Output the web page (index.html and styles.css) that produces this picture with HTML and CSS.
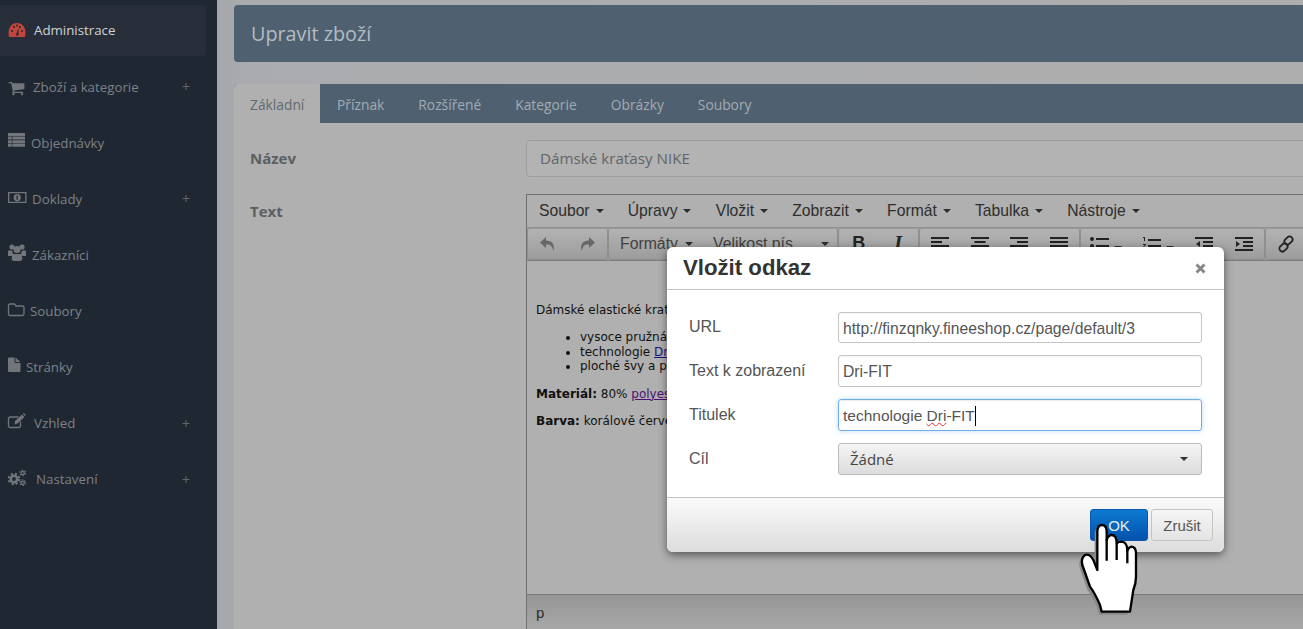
FILE: index.html
```html
<!DOCTYPE html>
<html lang="cs">
<head>
<meta charset="utf-8">
<title>Upravit zboží</title>
<link rel="stylesheet" href="styles.css">
</head>
<body>
<aside class="sidebar">
  <a class="nav-item active"><svg class="nav-icon" width="26" height="20" viewBox="0 0 26 20"><path class="red" d="M1 17 C-1 9 3 3 9 3 C15 3 19 9 17 17 Z"/><g fill="#1f2732"><circle cx="4" cy="11" r="1"/><circle cx="6" cy="7" r="1"/><circle cx="9" cy="5.5" r="1"/><circle cx="12" cy="7" r="1"/><circle cx="14" cy="11" r="1"/><path d="M8 15 L10.5 8 L10.5 15 A1.6 1.6 0 0 1 8 15Z"/></g></svg><span>Administrace</span></a>
  <a class="nav-item"><svg class="nav-icon" width="25" height="20" viewBox="0 0 25 20"><g transform="translate(0 2.5) scale(.0095)"><path d="M704 1536q0 52-38 90t-90 38-90-38-38-90 38-90 90-38 90 38 38 90zm896 0q0 52-38 90t-90 38-90-38-38-90 38-90 90-38 90 38 38 90zm128-1088v512q0 24-16.5 42.5t-40.5 21.5l-1044 122q13 60 13 70 0 16-24 64h920q26 0 45 19t19 45-19 45-45 19h-1024q-26 0-45-19t-19-45q0-11 8-31.5t16-36 21.5-40 15.5-29.5l-177-823h-204q-26 0-45-19t-19-45 19-45 45-19h256q16 0 28.5 6.5t19.5 15.5 13 24.5 8 26 5.5 29.5 4.5 26h1201q26 0 45 19t19 45z"/></g></svg><span>Zboží a kategorie</span><i class="plus">+</i></a>
  <a class="nav-item"><svg class="nav-icon" width="23" height="20" viewBox="0 0 23 20"><path d="M0 0h17v3.2H0zM0 3.8h3.8v2.8H0zM4.4 3.8H17v2.8H4.4zM0 7.2h3.8V10H0zM4.4 7.2H17V10H4.4zM0 10.6h3.8v3.2H0zM4.4 10.6H17v3.2H4.4z"/></svg><span>Objednávky</span></a>
  <a class="nav-item"><svg class="nav-icon" width="24" height="20" viewBox="0 0 24 20"><path fill-rule="evenodd" d="M0 3h18.500v11H0zM1.300 4.300v8.400h15.900V4.300zM9.200 5a3.600 3.600 0 1 1 0 7.200a3.600 3.600 0 0 1 0-7.200z"/><path class="dark" d="M8.500 6.500h1.300v4.200H8.500z"/></svg><span>Doklady</span><i class="plus">+</i></a>
  <a class="nav-item"><svg class="nav-icon" width="24" height="20" viewBox="0 0 24 20"><circle cx="4" cy="2" r="2.600"/><circle cx="14" cy="2" r="2.600"/><circle cx="9" cy="4.500" r="3.500"/><path d="M0 5.500h4l1 3-1 2.500H0zM18 5.500h-4l-1 3 1 2.500h4zM4.500 9h9l1 5.500-2 1.500H5.500l-2-1.500z"/></svg><span>Zákazníci</span></a>
  <a class="nav-item"><svg class="nav-icon" width="22" height="20" viewBox="0 0 22 20"><path class="line" d="M2 3h4.500l1.500 2h6.500q1.500 0 1.500 1.500v6q0 2-1.500 2H2q-1.500 0-1.500-1.500V4.500Q.5 3 2 3z"/></svg><span>Soubory</span></a>
  <a class="nav-item"><svg class="nav-icon" width="18" height="20" viewBox="0 0 18 20"><path d="M0 1.500Q0 .5 1 .5h5.500V5q0 1 1 1H12.500v8q0 1-1 1H1q-1 0-1-1zM7.500 .5l5 4.500h-5z"/></svg><span>Stránky</span></a>
  <a class="nav-item"><svg class="nav-icon" width="26" height="20" viewBox="0 0 26 20"><path class="line" d="M12.500 8.500v4q0 2-2 2H2.500q-2 0-2-2V6q0-2 2-2h8"/><path d="M7 8l7-6.500 2.500 2.500L9.500 10.500 6.500 11.500z"/><path d="M14.800 .8l1-.8 2 2-.8 1z"/></svg><span>Vzhled</span><i class="plus">+</i></a>
  <a class="nav-item"><svg class="nav-icon" width="28" height="20" viewBox="0 0 28 20"><circle class="gear-ring" cx="6" cy="10" r="3.200"/><circle class="gear-teeth" cx="6" cy="10" r="5.300"/><circle class="gear-ring small" cx="14.700" cy="4" r="1.600"/><circle class="gear-teeth small" cx="14.700" cy="4" r="2.800"/><circle class="gear-ring small" cx="14.700" cy="13.700" r="1.600"/><circle class="gear-teeth small" cx="14.700" cy="13.700" r="2.800"/></svg><span>Nastavení</span><i class="plus">+</i></a>
</aside>

<main class="main">
  <header class="page-title">Upravit zboží</header>
  <nav class="tabs">
    <a class="tab current">Základní</a>
    <a class="tab">Příznak</a>
    <a class="tab">Rozšířené</a>
    <a class="tab">Kategorie</a>
    <a class="tab">Obrázky</a>
    <a class="tab">Soubory</a>
  </nav>
  <section class="panel">
    <div class="field">
      <label class="field-label">Název</label>
      <div class="text-input">Dámské kraťasy NIKE</div>
    </div>
    <div class="field editor-field">
      <label class="field-label">Text</label>
      <div class="editor">
        <div class="menubar">
          <span class="menu">Soubor<b class="caret"></b></span>
          <span class="menu">Úpravy<b class="caret"></b></span>
          <span class="menu">Vložit<b class="caret"></b></span>
          <span class="menu">Zobrazit<b class="caret"></b></span>
          <span class="menu">Formát<b class="caret"></b></span>
          <span class="menu">Tabulka<b class="caret"></b></span>
          <span class="menu">Nástroje<b class="caret"></b></span>
        </div>
        <div class="toolbar">
          <div class="group">
            <span class="btn"><svg class="tool muted" width="18" height="16" viewBox="0 0 18 16"><path d="M7 1 1 6.500 7 12V8.500c4-.5 6 1 7.500 6.500C16 8 13 4.500 7 4.500z"/></svg></span>
            <span class="btn"><svg class="tool muted" width="18" height="16" viewBox="0 0 18 16"><path d="M11 1l6 5.500L11 12V8.500c-4-.5-6 1-7.500 6.500C2 8 5 4.500 11 4.500z"/></svg></span>
          </div>
          <div class="group">
            <span class="btn btn-formats">Formáty<b class="caret"></b></span>
            <span class="btn btn-size">Velikost pís<b class="caret"></b></span>
          </div>
          <div class="group">
            <span class="btn glyph">B</span>
            <span class="btn glyph italic">I</span>
          </div>
          <div class="group">
            <span class="btn btn-align"><svg class="tool" width="18" height="16" viewBox="0 0 18 16"><path d="M0 1h18v2H0zM0 5h11v2H0zM0 9h18v2H0zM0 13h11v2H0z"/></svg></span>
            <span class="btn btn-align"><svg class="tool" width="18" height="16" viewBox="0 0 18 16"><path d="M0 1h18v2H0zM3.500 5h11v2h-11zM0 9h18v2H0zM3.500 13h11v2h-11z"/></svg></span>
            <span class="btn btn-align"><svg class="tool" width="18" height="16" viewBox="0 0 18 16"><path d="M0 1h18v2H0zM7 5h11v2H7zM0 9h18v2H0zM7 13h11v2H7z"/></svg></span>
            <span class="btn btn-align"><svg class="tool" width="18" height="16" viewBox="0 0 18 16"><path d="M0 1h18v2H0zM0 5h18v2H0zM0 9h18v2H0zM0 13h18v2H0z"/></svg></span>
          </div>
          <div class="group">
            <span class="btn btn-list"><svg class="tool" width="19" height="16" viewBox="0 0 19 16"><circle cx="2" cy="3" r="2"/><circle cx="2" cy="10" r="2"/><path d="M6 2h13v2H6zM6 9h13v2H6z"/></svg><b class="caret caret-list"></b></span>
            <span class="btn btn-list wide"><svg class="tool" width="19" height="16" viewBox="0 0 19 16"><path d="M1 1h2v4H2V2H1zM1 8h3v1L2 11h2v1H1v-1l2-2H1zM6 3h13v2H6zM6 9h13v2H6z"/></svg><b class="caret caret-list"></b></span>
            <span class="btn btn-indent"><svg class="tool" width="18" height="16" viewBox="0 0 18 16"><path d="M0 1h18v2H0zM8 5h10v2H8zM8 9h10v2H8zM0 13h18v2H0zM5 5v6L1 8z"/></svg></span>
            <span class="btn btn-indent"><svg class="tool" width="18" height="16" viewBox="0 0 18 16"><path d="M0 1h18v2H0zM8 5h10v2H8zM8 9h10v2H8zM0 13h18v2H0zM1 5v6l4-3z"/></svg></span>
          </div>
          <div class="group">
            <span class="btn"><svg class="tool" width="18" height="18" viewBox="0 0 18 18"><g class="chain"><rect x="8.500" y="1" width="6" height="9" rx="3" transform="rotate(45 11.500 5.500)"/><rect x="3.500" y="8" width="6" height="9" rx="3" transform="rotate(45 6.500 12.500)"/></g></svg></span>
          </div>
        </div>
        <div class="content">
          <p>Dámské elastické kraťasy</p>
          <ul>
            <li>vysoce pružná</li>
            <li>technologie <a class="link">Dri-FIT</a></li>
            <li>ploché švy a pas</li>
          </ul>
          <p><strong>Materiál:</strong> 80% <a class="link visited">polyester</a></p>
          <p><strong>Barva:</strong> korálově červená</p>
        </div>
        <div class="statusbar">p</div>
      </div>
    </div>
  </section>
</main>

<div class="modal" role="dialog">
  <div class="modal-head">
    <h2>Vložit odkaz</h2>
    <svg class="close" width="11" height="11" viewBox="0 0 11 11"><path d="M1.500 1.500l8 8M9.500 1.500l-8 8"/></svg>
  </div>
  <div class="modal-body">
    <div class="modal-row"><label>URL</label><div class="modal-input">http://finzqnky.fineeshop.cz/page/default/3</div></div>
    <div class="modal-row"><label>Text k zobrazení</label><div class="modal-input">Dri-FIT</div></div>
    <div class="modal-row"><label>Titulek</label><div class="modal-input focused"><span class="typed">technologie <span class="misspelled">Dri</span>-FIT</span></div></div>
    <div class="modal-row"><label>Cíl</label><div class="modal-select">Žádné<b class="caret"></b></div></div>
  </div>
  <div class="modal-foot">
    <span class="action primary">OK</span>
    <span class="action">Zrušit</span>
  </div>
</div>

<svg class="hand" width="70" height="100" viewBox="99 120 210 300">
  <path class="hand-shadow" d="M172 270V155Q172 135 186 135Q200 135 200 155V180Q205 165 215 165Q230 165 230 190Q235 185 246 185Q262 187 262 212Q268 200 275 200Q288 202 288 220V290Q288 310 280 330L270 395H185L180 375Q165 340 150 320L127 255Q122 235 135 225Q150 220 160 240Z" transform="translate(-8 9)"/>
  <path class="hand-fill" d="M172 270V155Q172 135 186 135Q200 135 200 155V180Q205 165 215 165Q230 165 230 190Q235 185 246 185Q262 187 262 212Q268 200 275 200Q288 202 288 220V290Q288 310 280 330L270 395H185L180 375Q165 340 150 320L127 255Q122 235 135 225Q150 220 160 240Z"/>
  <path class="hand-lines" d="M200 178V242M230 190V240M262 212V250"/>
</svg>
</body>
</html>
```
FILE: styles.css
```css
* { box-sizing: border-box; }
html, body { height: 100%; }
body {
  margin: 0;
  display: flex;
  height: 629px;
  overflow: hidden;
  background: #a9abae;
  font-family: "Open Sans", sans-serif;
}

/* sidebar */
.sidebar {
  flex: 0 0 217px;
  background: #1f2732;
  padding-top: 5.400px;
  display: flex;
  flex-direction: column;
  gap: 6px;
}
.nav-item {
  width: 206px;
  height: 50.130px;
  flex: none;
  padding: 0 16px 0 8px;
  display: flex;
  align-items: center;
  font-size: 13.300px;
  color: #7e8287;
  border-radius: 0 4px 4px 0;
}
.nav-item.active { background: #272e39; color: #ced3d8; }
.nav-icon { flex: none; overflow: visible; fill: #72767a; }
.nav-icon .red { fill: #c0453d; }
.nav-icon .dark { fill: #1f2732; }
.nav-icon .line { fill: none; stroke: #72767a; stroke-width: 1.300; }
.gear-ring { fill: none; stroke: #72767a; stroke-width: 2.600; }
.gear-ring.small { stroke-width: 1.300; }
.gear-teeth { fill: none; stroke: #72767a; stroke-width: 2; stroke-dasharray: 2.200 2; }
.gear-teeth.small { stroke-width: 1.200; stroke-dasharray: 1.500 1.430; }
.plus { margin-left: auto; font-style: normal; font-size: 14px; color: #62676c; }

/* main */
.main {
  flex: 1;
  min-width: 0;
  padding: 5px 0 0 17px;
  display: flex;
  flex-direction: column;
  background: linear-gradient(90deg, #a5a7ac 0, #a9abae 30px, #aeaeae 100%);
}
.page-title {
  height: 57px;
  flex: none;
  padding-left: 17px;
  display: flex;
  align-items: center;
  background: #4f6070;
  border-radius: 4px 0 0 4px;
  color: #b4bcc3;
  font-size: 19.800px;
}
.tabs {
  margin-top: 22px;
  height: 39px;
  flex: none;
  display: flex;
  background: #4f6070;
  border-radius: 4px 0 0 0;
  font-size: 13.800px;
}
.tab {
  padding: 0 17px;
  line-height: 41px;
  color: #a3abb3;
}
.tab.current {
  padding: 0 15.700px 0 16px;
  background: #b0b0b0;
  color: #61696f;
  border-radius: 4px 0 0 0;
}
.panel {
  flex: 1;
  min-height: 0;
  overflow: hidden;
  background: #b0b0b0;
  padding: 17px 0 0 16px;
}
.field { display: flex; width: 1100px; }
.editor-field { margin-top: 17px; }
.field-label {
  flex: 0 0 276px;
  font-size: 15px;
  font-weight: 700;
  color: #5c5f62;
  line-height: 37px;
}
.editor-field .field-label { line-height: 35px; }
.text-input {
  flex: 1;
  height: 37px;
  padding-left: 13px;
  line-height: 34px;
  font-size: 15.200px;
  color: #626568;
  border: 1px solid #9d9d9d;
  border-radius: 4px;
  background: #b3b3b3;
}

/* editor */
.editor {
  flex: 1;
  height: 437px;
  border: 1px solid #707070;
  display: flex;
  flex-direction: column;
  font-family: "Liberation Sans", Arial, sans-serif;
  color: #2d2d2d;
}
.menubar {
  height: 33px;
  flex: none;
  padding-left: 12px;
  display: flex;
  align-items: center;
  gap: 24.200px;
  font-size: 15.700px;
  background: #b0b0b0;
  border-bottom: 1px solid #8f8f8f;
}
.menu { display: flex; align-items: center; }
.caret {
  display: inline-block;
  width: 0;
  height: 0;
  margin-left: 6px;
  border-left: 4px solid transparent;
  border-right: 4px solid transparent;
  border-top: 4px solid #2d2d2d;
}
.toolbar {
  height: 33px;
  flex: none;
  display: flex;
  background: #a4a4a4;
  border-bottom: 1px solid #7e7e7e;
}
.group {
  display: flex;
  border: 1px solid #8f8f8f;
  border-top-color: #9a9a9a;
  border-radius: 3px;
  background: linear-gradient(#b3b3b3, #9c9c9c);
}
.btn {
  width: 39.500px;
  display: flex;
  align-items: center;
  justify-content: center;
  font-size: 15.800px;
  color: #414141;
}
.btn-formats { width: 92px; justify-content: flex-start; padding-left: 11px; }
.btn-size { width: 136px; justify-content: flex-start; padding-left: 12px; }
.btn-size .caret { margin-left: auto; margin-right: 8px; }
.btn-formats .caret { margin-left: 7px; }
.btn-align { width: 39.750px; }
.btn-list { width: 50px; gap: 5px; }
.btn-list.wide { width: 53px; }
.btn-indent { width: 40px; }
.caret-list { margin: 8px 0 0 0; }
.glyph { font-weight: 700; font-size: 18px; color: #222; padding-bottom: 2px; }
.glyph.italic { font-style: italic; font-family: "Liberation Serif", serif; font-size: 20px; }
.tool { fill: #222; flex: none; }
.tool.muted { fill: #686868; }
.chain rect { fill: none; stroke: #222; stroke-width: 1.800; }
.content {
  flex: 1;
  min-height: 0;
  overflow: hidden;
  padding: 29px 0 0 9px;
  font-family: "DejaVu Sans", Verdana, sans-serif;
  font-size: 12px;
  line-height: 14.500px;
  color: #111;
  background: #b0b0b0;
}
.content p { margin: 12.500px 0; }
.content ul { margin: 13px 0; padding-left: 44px; }
.link { color: #20137e; text-decoration: underline; }
.link.visited { color: #4a1370; }
.statusbar {
  height: 36px;
  flex: none;
  padding: 9px 0 0 9px;
  font-size: 15px;
  line-height: 18px;
  background: linear-gradient(#969696, #a8a8a8);
  border-top: 1px solid #7a7a7a;
}

/* dialog */
.modal {
  position: absolute;
  left: 667px;
  top: 247px;
  width: 557px;
  height: 305px;
  display: flex;
  flex-direction: column;
  background: #fff;
  border-radius: 6px;
  box-shadow: 0 3px 9px rgba(0, 0, 0, .5);
  font-family: "Liberation Sans", Arial, sans-serif;
  color: #555;
  font-size: 15.700px;
}
.modal-head {
  height: 43px;
  flex: none;
  padding: 0 17px 0 16px;
  display: flex;
  align-items: center;
  justify-content: space-between;
  border-bottom: 1px solid #c5c5c5;
}
.modal-head h2 { margin: 0; font-size: 22.200px; font-weight: 700; color: #333; }
.close { stroke: #888; stroke-width: 3; fill: none; margin-right: 1px; }
.modal-body {
  flex: 1;
  padding: 22px 22px 0;
  display: flex;
  flex-direction: column;
  gap: 12px;
}
.modal-row { display: flex; align-items: center; height: 32px; }
.modal-row:first-child { height: 31px; }
.modal-row label { flex: 0 0 149px; margin-top: -1px; font-size: 16px; }
.modal-input {
  flex: 1;
  height: 100%;
  padding-left: 4px;
  line-height: 31px;
  border: 1px solid #c5c5c5;
  border-radius: 3px;
  color: #555;
  box-shadow: inset 0 1px 1px rgba(0, 0, 0, .05);
}
.modal-input.focused {
  border-color: #70aee8;
  box-shadow: inset 0 1px 1px rgba(0, 0, 0, .08), 0 0 5px rgba(82, 168, 236, .4);
}
.typed { display: inline-block; line-height: 20px; border-right: 1px solid #000; vertical-align: middle; margin-top: -2px; font-size: 15.500px; }
.misspelled { text-decoration: underline wavy #e03030; text-decoration-thickness: 1px; }
.modal-select {
  flex: 1;
  height: 32px;
  padding: 0 13px 0 11px;
  display: flex;
  align-items: center;
  justify-content: space-between;
  border: 1px solid #bbb;
  border-radius: 3px;
  background: linear-gradient(#f4f4f4, #dcdcdc);
  color: #444;
  font-family: "Open Sans", sans-serif;
  font-size: 15px;
}
.modal-select .caret { border-top-color: #333; }
.modal-foot {
  height: 55px;
  flex: none;
  padding: 0 11px 0 0;
  display: flex;
  align-items: center;
  justify-content: flex-end;
  gap: 3px;
  border-top: 1px solid #c5c5c5;
  border-radius: 0 0 6px 6px;
  background: linear-gradient(#fbfbfb, #dcdcdc);
}
.action {
  width: 62px;
  height: 32px;
  display: flex;
  align-items: center;
  justify-content: center;
  border: 1px solid #c4c4c4;
  border-radius: 3px;
  background: linear-gradient(#f6f6f6, #e3e3e3);
  color: #555;
  font-size: 15px;
}
.action.primary {
  width: 58px;
  border-color: #0a58ac;
  background: linear-gradient(#0d7ad0, #0452ac);
  color: #e8f0f8;
  font-size: 15px;
}

/* pointer */
.hand {
  position: absolute;
  left: 1073px;
  top: 520px;
}
.hand-shadow { fill: #888; }
.hand-fill { fill: #fff; stroke: #000; stroke-width: 7; stroke-linejoin: round; }
.hand-lines { fill: none; stroke: #000; stroke-width: 7; }
```
